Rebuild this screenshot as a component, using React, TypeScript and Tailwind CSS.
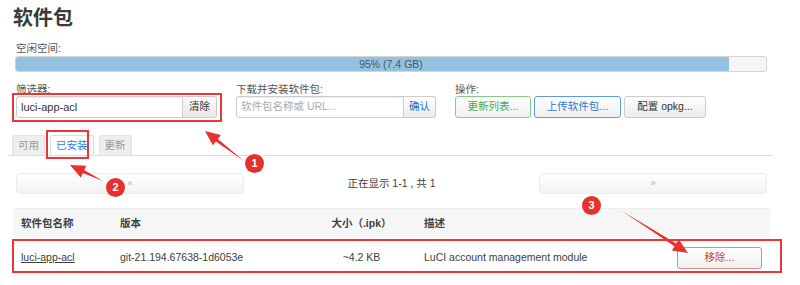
import React from "react";

type P = [number, number];

function arrowPoints(tail: P, tip: P, headLen = 15, headW = 6.5, shaftW = 1.6): string {
  const dx = tip[0] - tail[0];
  const dy = tip[1] - tail[1];
  const len = Math.hypot(dx, dy);
  const ux = dx / len;
  const uy = dy / len;
  const nx = -uy;
  const ny = ux;
  const bx = tip[0] - ux * headLen;
  const by = tip[1] - uy * headLen;
  const pts: P[] = [
    tail,
    [bx + nx * shaftW, by + ny * shaftW],
    [bx + nx * headW, by + ny * headW],
    tip,
    [bx - nx * headW, by - ny * headW],
    [bx - nx * shaftW, by - ny * shaftW],
  ];
  return pts.map((p) => `${p[0].toFixed(1)},${p[1].toFixed(1)}`).join(" ");
}

function Badge({ n, className }: { n: string; className: string }) {
  return (
    <div
      className={`absolute w-[19px] h-[19px] rounded-full bg-[#e5302b] text-white text-[11px] font-bold leading-[19px] text-center ${className}`}
    >
      {n}
    </div>
  );
}

export default function App() {
  return (
    <div className="relative w-[800px] h-[285px] overflow-hidden bg-white text-[#404040] text-[10.5px] font-[family-name:Liberation_Sans,Noto_Sans_CJK_SC,sans-serif]">
      <div className="pl-[15px] pr-[33px]">
        <h2 className="pt-[4px] -ml-[2px] text-[20px] leading-[28px] font-bold text-[#3a3a3a]">软件包</h2>
        <div className="mt-[8px] pl-[1px] leading-[16px] text-[#555]">空闲空间:</div>
        <div className="grid h-[16px] rounded-[3px] border border-[#d5d5d5] bg-[#f5f5f5] overflow-hidden">
          <div className="col-start-1 row-start-1 h-full w-[95%] bg-[#92c1e1]" />
          <div className="col-start-1 row-start-1 text-center leading-[14px] text-[#555]">95% (7.4 GB)</div>
        </div>

        <div className="mt-[10px] flex gap-[19px] pl-[1px]">
          <div className="w-[201px]">
            <div className="leading-[14px] text-[#555]">筛选器:</div>
            <div className="flex h-[22px]">
              <div className="flex-1 flex items-center pl-[4px] border border-[#ccc] rounded-l-[3px] text-[#333] text-[11px] shadow-[inset_0_1px_1px_rgba(0,0,0,0.08)]">
                luci-app-acl
              </div>
              <div className="w-[34px] flex items-center justify-center border border-l-0 border-[#ccc] rounded-r-[3px] bg-linear-to-b from-[#fafafa] to-[#e8e8e8] text-[#333]">
                清除
              </div>
            </div>
          </div>
          <div className="w-[200px]">
            <div className="leading-[14px] text-[#555]">下载并安装软件包:</div>
            <div className="flex h-[22px]">
              <div className="flex-1 flex items-center pl-[4px] border border-[#ccc] rounded-l-[3px] text-[#aaa] shadow-[inset_0_1px_1px_rgba(0,0,0,0.08)]">
                软件包名称或 URL...
              </div>
              <div className="w-[32px] flex items-center justify-center border border-l-0 border-[#ccc] rounded-r-[3px] bg-linear-to-b from-white to-[#ececec] text-[#2a6ebd]">
                确认
              </div>
            </div>
          </div>
          <div>
            <div className="leading-[14px] text-[#555]">操作:</div>
            <div className="flex h-[22px] gap-[3px]">
              <div className="w-[76px] flex items-center justify-center border border-[#86cc86] rounded-[3px] bg-linear-to-b from-white to-[#f0f0f0] text-[#4aa84a]">
                更新列表...
              </div>
              <div className="w-[87px] flex items-center justify-center border border-[#5b9fe3] rounded-[3px] bg-linear-to-b from-white to-[#f0f0f0] text-[#2a76d2]">
                上传软件包...
              </div>
              <div className="w-[82px] flex items-center justify-center border border-[#ccc] rounded-[3px] bg-linear-to-b from-white to-[#ececec] text-[#333]">
                配置 opkg...
              </div>
            </div>
          </div>
        </div>

        <div className="mt-[17px] -ml-[7px] -mr-[6px] pl-[4px] flex gap-[5px] border-b border-[#ddd]">
          <div className="h-[20px] px-[5px] flex items-center rounded-t-[3px] border border-b-0 border-[#e2e2e2] bg-[#eee] text-[#999]">可用</div>
          <div className="h-[20px] px-[5px] flex items-center rounded-t-[3px] border border-b-0 border-[#ddd] bg-white text-[#2b7be0]">已安装</div>
          <div className="h-[20px] px-[5px] flex items-center rounded-t-[3px] border border-b-0 border-[#e2e2e2] bg-[#eee] text-[#999]">更新</div>
        </div>

        <div className="mt-[17px] flex items-center h-[21px]">
          <div className="ml-[1px] w-[228px] h-full flex items-center justify-center rounded-[4px] border border-[#ececec] bg-linear-to-b from-white to-[#f2f2f2] text-[#aaa] text-[9px]">
            «
          </div>
          <div className="flex-1 text-center text-[#404040]">正在显示 1-1 , 共 1</div>
          <div className="w-[228px] h-full flex items-center justify-center rounded-[4px] border border-[#ececec] bg-linear-to-b from-white to-[#f2f2f2] text-[#aaa] text-[9px]">
            »
          </div>
        </div>

        <div className="mt-[14px] -ml-[2px] w-[757px]">
          <div className="h-[30px] flex items-center pl-[8px] bg-[#f6f6f6] border-t border-[#eee] font-bold text-[#404040]">
            <div className="w-[99px]">软件包名称</div>
            <div className="w-[200px]">版本</div>
            <div className="w-[83px] text-center">大小（.ipk）</div>
            <div className="w-[274px] pl-[21px]">描述</div>
          </div>
          <div className="h-[40px] flex items-center pl-[8px] text-[#404040]">
            <div className="w-[99px] underline">luci-app-acl</div>
            <div className="w-[200px]">git-21.194.67638-1d6053e</div>
            <div className="w-[83px] text-center">~4.2 KB</div>
            <div className="w-[274px] pl-[21px]">LuCI account management module</div>
            <div className="w-[85px] h-[22px] flex items-center justify-center rounded-[3px] border border-[#dd8a88] bg-linear-to-b from-white to-[#f0f0f0] text-[#c9403c]">
              移除...
            </div>
          </div>
        </div>
      </div>

      {/* annotations */}
      <div className="absolute left-[12px] top-[93px] w-[210px] h-[29px] border-2 border-[#ee3535]" />
      <div className="absolute left-[46px] top-[130px] w-[43px] h-[29px] border-2 border-[#ee3535]" />
      <div className="absolute left-[12px] top-[239px] w-[770px] h-[34px] border-2 border-[#ee3535]" />
      <svg className="absolute left-0 top-0" width="800" height="285" viewBox="0 0 800 285">
        <polygon points={arrowPoints([244, 161], [205, 131])} fill="#e8302c" />
        <polygon points={arrowPoints([103, 181], [70, 165])} fill="#e8302c" />
        <polygon points={arrowPoints([622, 211], [688, 253])} fill="#e8302c" />
      </svg>
      <Badge n="1" className="left-[245px] top-[154px]" />
      <Badge n="2" className="left-[106px] top-[178px]" />
      <Badge n="3" className="left-[582px] top-[196px]" />
    </div>
  );
}
